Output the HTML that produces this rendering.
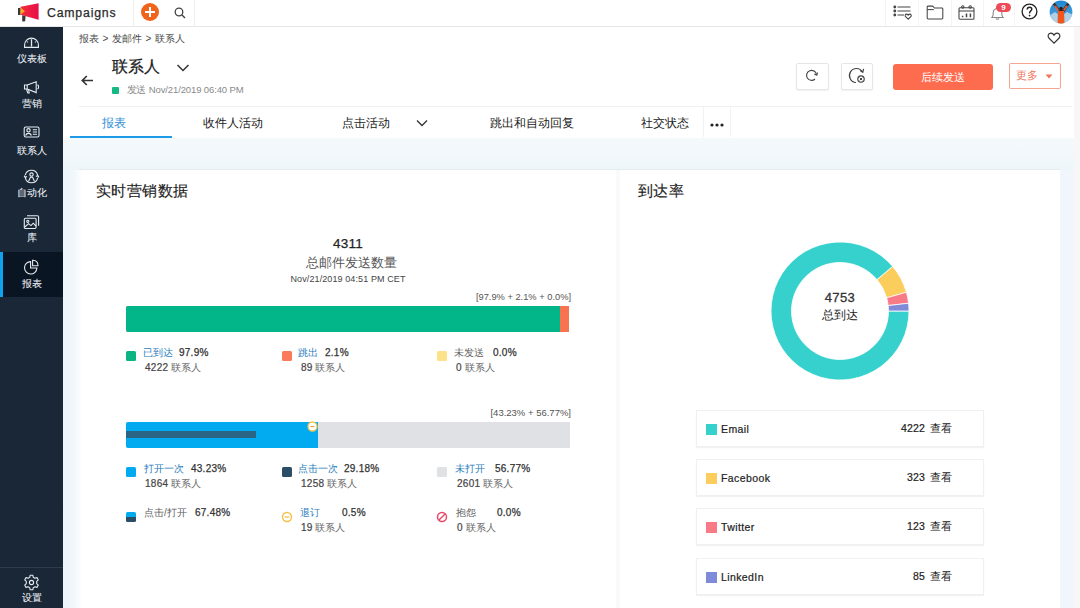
<!DOCTYPE html>
<html><head><meta charset="utf-8">
<style>
*{margin:0;padding:0;box-sizing:border-box}
html,body{width:1080px;height:608px;overflow:hidden;background:#fff;font-family:"Liberation Sans",sans-serif;color:#222}
.a{position:absolute;white-space:nowrap}
#top{position:absolute;left:0;top:0;width:1080px;height:27px;background:#fff;border-bottom:1px solid #e6e6e6}
#side{position:absolute;left:0;top:27px;width:63px;height:581px;background:#192737}
.sl{position:absolute;left:0;width:63px;text-align:center;color:#f2f4f7;font-size:10px;line-height:10px;-webkit-text-stroke:0.05px #f2f4f7}
#main{position:absolute;left:63px;top:27px;width:1017px;height:581px;background:#f0f6fb}
.sq{width:10px;height:10px;border-radius:1.5px}
.lk{font-size:10px;line-height:13px;color:#2a7dbd}
.gy{font-size:10px;line-height:13px;color:#5f5f5f}
.pc{font-size:10px;line-height:13px;color:#333;-webkit-text-stroke:0.25px #333;letter-spacing:0.25px}
.ct{font-size:9.6px;line-height:13px;color:#666}
.ct b{color:#444;font-weight:normal;-webkit-text-stroke:0.2px #444;letter-spacing:0.3px;font-size:10px}
.li{left:696px;width:288px;height:37px;border:1px solid #eef0f2;background:#fff;box-shadow:0 1px 1px rgba(0,0,0,0.05)}
.ls{position:absolute;left:9px;top:13px;width:11px;height:11px}
.ln{position:absolute;left:24px;top:11.5px;font-size:10.5px;line-height:13px;color:#222;-webkit-text-stroke:0.2px #222;letter-spacing:0.4px}
.lv{position:absolute;right:31px;top:11px;font-size:10.5px;line-height:13px;color:#222}
.lv b{font-weight:normal;-webkit-text-stroke:0.2px #222;letter-spacing:0.15px;margin-right:2px}
</style></head><body>
<div id="top">
  <svg class="a" style="left:14px;top:0px" width="30" height="26" viewBox="0 0 30 26">
    <defs><linearGradient id="mg" x1="0" y1="0" x2="1" y2="0"><stop offset="0" stop-color="#f52b3a"/><stop offset="1" stop-color="#e60f4a"/></linearGradient></defs>
    <rect x="4" y="8" width="2.6" height="7" fill="#3a3a3a"/>
    <path d="M6.6 6.8 L24.6 3.2 L24.6 19.7 L6.6 14.8 Z" fill="url(#mg)"/>
    <path d="M6.6 7.6 L11 11.2 L6.6 14.4 Z" fill="#ffa91c"/>
    <path d="M8.2 15.2 L11.6 16 L11.2 21 C11.1 21.6 8.2 21.6 8.2 21 Z" fill="#3a3a3a"/>
  </svg>
  <div class="a" style="left:47px;top:5.5px;font-size:12.3px;line-height:15px;color:#2a2a2a;-webkit-text-stroke:0.25px #2a2a2a;letter-spacing:0.8px">Campaigns</div>
  <div class="a" style="left:133px;top:0;width:1px;height:27px;background:#eee"></div>
  <div class="a" style="left:141px;top:3px;width:18px;height:18px;border-radius:50%;background:#f0631d"></div>
  <div class="a" style="left:149px;top:7px;width:2px;height:10px;background:#fff"></div>
  <div class="a" style="left:145px;top:11px;width:10px;height:2px;background:#fff"></div>
  <svg class="a" style="left:174px;top:7px" width="12" height="12" viewBox="0 0 12 12"><circle cx="5" cy="5" r="3.8" fill="none" stroke="#444" stroke-width="1.3"/><path d="M8 8 L11 11" stroke="#444" stroke-width="1.4"/></svg>
  <div class="a" style="left:194px;top:0;width:1px;height:27px;background:#eee"></div>
  <div class="a" style="left:885px;top:0;width:1px;height:26px;background:#f4f4f4"></div>
  <svg class="a" style="left:893px;top:5px" width="20" height="15" viewBox="0 0 20 15" fill="none" stroke="#444" stroke-width="1.05"><circle cx="1.8" cy="2" r="0.9" fill="#444"/><circle cx="1.8" cy="6" r="0.9" fill="#444"/><circle cx="1.8" cy="10" r="0.9" fill="#444"/><path d="M4.5 2 H17.5 M4.5 6 H17.5 M4.5 10 H11"/><path d="M15.2 14.2 L12.6 11.7 C11.7 10.8 12.2 9.1 13.5 9.1 C14.3 9.1 14.8 9.7 15.2 10.2 C15.6 9.7 16.1 9.1 16.9 9.1 C18.2 9.1 18.7 10.8 17.8 11.7 Z"/></svg>
  <div class="a" style="left:918px;top:0;width:1px;height:26px;background:#f4f4f4"></div>
  <svg class="a" style="left:926px;top:5px" width="18" height="15" viewBox="0 0 18 15" fill="none" stroke="#444" stroke-width="1.05"><path d="M1.2 3.6 V2 C1.2 1.4 1.5 1.1 2.1 1.1 H6.2 C6.8 1.1 7.2 1.5 7.6 2 L8.4 3 H15.9 C16.5 3 16.8 3.3 16.8 3.9 V13.1 C16.8 13.7 16.5 14 15.9 14 H2.1 C1.5 14 1.2 13.7 1.2 13.1 Z"/><path d="M1.2 4.6 H7.8"/></svg>
  <div class="a" style="left:951px;top:0;width:1px;height:26px;background:#f4f4f4"></div>
  <svg class="a" style="left:958px;top:5px" width="17" height="15" viewBox="0 0 17 15" fill="none" stroke="#444" stroke-width="1.05"><rect x="1" y="2.8" width="15" height="11.4" rx="1"/><path d="M1 6 H16"/><circle cx="4.8" cy="2" r="1.2"/><circle cx="12.2" cy="2" r="1.2"/><path d="M4.6 10.8 V12.2 M8.5 8.6 V12.2 M12.4 8.6 V12.2" stroke-width="1.5"/></svg>
  <div class="a" style="left:983px;top:0;width:1px;height:26px;background:#f4f4f4"></div>
  <svg class="a" style="left:990px;top:7px" width="15" height="13" viewBox="0 0 15 13" fill="none" stroke="#888" stroke-width="1.1"><path d="M2 10.5 C3.5 9 3 8 3.2 5.5 C3.5 2.5 5.5 1.5 7.5 1.5 C9.5 1.5 11.5 2.5 11.8 5.5 C12 8 11.5 9 13 10.5 Z"/><path d="M6 11.5 C6.3 12.5 8.7 12.5 9 11.5"/></svg>
  <div class="a" style="left:996px;top:3px;width:15px;height:9px;border-radius:5px;background:#ef4a58;color:#fff;font-size:8px;line-height:9px;text-align:center;font-weight:bold">9</div>
  <div class="a" style="left:1014px;top:0;width:1px;height:26px;background:#f4f4f4"></div>
  <svg class="a" style="left:1021px;top:3px" width="17" height="17" viewBox="0 0 17 17"><circle cx="8.5" cy="8.5" r="7.4" fill="none" stroke="#222" stroke-width="1.3"/><path d="M6.2 6.6 C6.2 5 7.2 4.2 8.5 4.2 C9.9 4.2 10.8 5.1 10.8 6.3 C10.8 7.8 8.6 8 8.6 9.8 V10.4" fill="none" stroke="#222" stroke-width="1.4"/><circle cx="8.6" cy="12.6" r="0.9" fill="#222"/></svg>
  <svg class="a" style="left:1049px;top:0px" width="24" height="24" viewBox="0 0 24 24"><defs><clipPath id="av"><circle cx="12" cy="12" r="11.4"/></clipPath><linearGradient id="sky" x1="0" y1="0" x2="0" y2="1"><stop offset="0" stop-color="#1e86d2"/><stop offset="1" stop-color="#5aa8dc"/></linearGradient></defs><g clip-path="url(#av)"><rect x="0" y="0" width="24" height="24" fill="url(#sky)"/><path d="M0 16 L6 12 L10 15 L10 24 H0 Z" fill="#c9dcea" opacity="0.8"/><path d="M24 15 L18 12 L14 15 L14 24 H24 Z" fill="#c9dcea" opacity="0.8"/><path d="M3.5 4 L6 3 L10.5 9.5 H13.5 L18 3 L20.5 4 L15.5 12 L11 12 Z" fill="#3a2824"/><path d="M5 6 L7 5.5 L10 10 L8.5 11 Z M19 6 L17 5.5 L14 10 L15.5 11 Z" fill="#d9603a"/><circle cx="12" cy="8.5" r="1.8" fill="#2a1f1c"/><path d="M9 11 H15 L15.5 24 H8.5 Z" fill="#f2561a"/></g></svg>
</div>
<div id="side">
  <svg class="a" style="left:23px;top:9px" width="17" height="13" viewBox="0 0 17 13" fill="none" stroke="#e6ebf0" stroke-width="1.15"><path d="M1.6 11.4 V9 A6.9 6.9 0 0 1 15.4 9 V11.4 Z"/><path d="M8.5 3.2 V10.6" stroke-width="1.3"/><path d="M4 5.6 L4.9 6.4 M13 5.6 L12.1 6.4"/></svg>
  <div class="sl" style="top:27px">仪表板</div>
  <svg class="a" style="left:23px;top:54px" width="17" height="13" viewBox="0 0 17 13" fill="none" stroke="#e6ebf0" stroke-width="1.1"><path d="M1.5 4 H4.2 V8 H1.5 Z"/><path d="M4.2 4 L13.2 0.8 V11.6 L4.2 8"/><path d="M14.5 3.8 C16 4.8 16 7 14.5 8"/><path d="M3.5 8.2 L4.8 12 H6.2 L5.6 8.6"/></svg>
  <div class="sl" style="top:72px">营销</div>
  <svg class="a" style="left:23px;top:99px" width="17" height="12" viewBox="0 0 17 12" fill="none" stroke="#e6ebf0" stroke-width="1.1"><rect x="1.2" y="1" width="14.8" height="10" rx="1.5"/><circle cx="5.5" cy="4.3" r="1.7"/><path d="M2.8 9.6 C3 6.6 8 6.6 8.2 9.6"/><path d="M9.8 3.8 H14 M9.8 6 H14 M9.8 8.2 H14"/></svg>
  <div class="sl" style="top:119px">联系人</div>
  <svg class="a" style="left:23px;top:142px" width="17" height="15" viewBox="0 0 17 15" fill="none" stroke="#e6ebf0" stroke-width="1.1"><path d="M2.3 6.2 A6.3 6.3 0 0 1 14.6 6.2"/><path d="M14.7 8.6 A6.3 6.3 0 0 1 2.3 8.6"/><path d="M13 7.6 L14.8 6.6 L15.9 8.4"/><path d="M4 7.4 L2.2 8.4 L1.1 6.6"/><circle cx="8.5" cy="5.6" r="1.7"/><path d="M5.6 12.2 L7.4 8.2 H9.6 L11.4 12.2"/></svg>
  <div class="sl" style="top:161px">自动化</div>
  <svg class="a" style="left:23px;top:187px" width="17" height="16" viewBox="0 0 17 16" fill="none" stroke="#e6ebf0" stroke-width="1.1"><rect x="1.3" y="4.2" width="11.8" height="10.3" rx="1.2"/><path d="M4 1.8 H14.4 C15.2 1.8 15.6 2.2 15.6 3 V11.8"/><circle cx="4.8" cy="7.3" r="1.1"/><path d="M1.8 13 L5.5 9.6 L8 11.6 L10.2 9.2 L13 12"/></svg>
  <div class="sl" style="top:206px">库</div>
  <div class="a" style="left:0;top:224.5px;width:63px;height:45px;background:#0a1524"></div>
  <div class="a" style="left:0;top:224.5px;width:2.5px;height:45px;background:#11a2ee"></div>
  <svg class="a" style="left:23px;top:232px" width="17" height="16" viewBox="0 0 17 16" fill="none" stroke="#e6ebf0" stroke-width="1.1"><path d="M7.6 2.6 A6.2 6.2 0 1 0 13.9 9 H7.6 Z"/><path d="M9.6 1.2 A5 5 0 0 1 15 6.8 H9.6 Z"/></svg>
  <div class="sl" style="top:252px">报表</div>
  <div class="a" style="left:0;top:540px;width:63px;height:1px;background:#2e3c4f"></div>
  <svg class="a" style="left:23px;top:547px" width="17" height="17" viewBox="0 0 17 17" fill="none" stroke="#e6ebf0" stroke-width="1.1"><path d="M7.2 1.2 H9.8 L10.3 3.3 L11.9 4.2 L14 3.6 L15.3 5.9 L13.7 7.4 V9.6 L15.3 11.1 L14 13.4 L11.9 12.8 L10.3 13.7 L9.8 15.8 H7.2 L6.7 13.7 L5.1 12.8 L3 13.4 L1.7 11.1 L3.3 9.6 V7.4 L1.7 5.9 L3 3.6 L5.1 4.2 L6.7 3.3 Z" stroke-linejoin="round"/><circle cx="8.5" cy="8.5" r="2.1"/></svg>
  <div class="sl" style="top:566px">设置</div>
</div>
<div id="main"></div>
<!-- header -->
<div class="a" style="left:63px;top:27px;width:1017px;height:80px;background:#fff"></div>
<div class="a" style="left:79px;top:106px;width:993px;height:1px;background:#eef0f2"></div>
<div class="a" style="left:79px;top:33px;font-size:10px;line-height:12px;color:#4a4a4a;word-spacing:0.8px">报表 &gt; 发邮件 &gt; 联系人</div>
<svg class="a" style="left:1047px;top:31.5px" width="14" height="12.5" viewBox="0 0 15 14" fill="none" stroke="#333" stroke-width="1.3"><path d="M7.5 12.5 L2 7 C0 5 0.8 1.5 3.8 1.3 C5.5 1.2 6.8 2.3 7.5 3.5 C8.2 2.3 9.5 1.2 11.2 1.3 C14.2 1.5 15 5 13 7 Z"/></svg>
<svg class="a" style="left:81px;top:75px" width="13" height="11" viewBox="0 0 13 11" fill="none" stroke="#333" stroke-width="1.7"><path d="M12 5.5 H1.5 M5.8 1 L1.3 5.5 L5.8 10"/></svg>
<div class="a" style="left:112px;top:58px;font-size:16px;line-height:18px;color:#222;-webkit-text-stroke:0.25px #222">联系人</div>
<svg class="a" style="left:176px;top:63px" width="14" height="10" viewBox="0 0 14 10" fill="none" stroke="#333" stroke-width="1.5"><path d="M1.5 2 L7 7.5 L12.5 2"/></svg>
<div class="a" style="left:112px;top:87px;width:7px;height:7px;background:#18b884;border-radius:1px"></div>
<div class="a" style="left:126.5px;top:84px;font-size:9.5px;line-height:12px;color:#8a8a8a;letter-spacing:-0.12px">发送 Nov/21/2019 06:40 PM</div>
<div class="a" style="left:796px;top:63px;width:33px;height:27px;border:1px solid #e6e6e6;border-radius:2px;background:#fff;box-shadow:0 1px 2px rgba(0,0,0,0.06)"></div>
<svg class="a" style="left:804px;top:69px" width="15" height="13" viewBox="0 0 15 13" fill="none" stroke="#444" stroke-width="1.1"><path d="M12.5 5.5 A5 5 0 1 0 11 10"/><path d="M10.3 5 L12.8 6.3 L13.6 3.6"/></svg>
<div class="a" style="left:841px;top:63px;width:32px;height:27px;border:1px solid #e6e6e6;border-radius:2px;background:#fff;box-shadow:0 1px 2px rgba(0,0,0,0.06)"></div>
<svg class="a" style="left:847px;top:66px" width="19" height="18" viewBox="0 0 19 18" fill="none" stroke="#444" stroke-width="1.2"><path d="M15.5 6 A7 7 0 1 0 9 16.5"/><path d="M13 4.6 L15.8 6.3 L16.6 2.8"/><circle cx="14" cy="13" r="3.2"/><path d="M12.7 11.7 L15.3 14.3 M15.3 11.7 L12.7 14.3" stroke-width="1"/></svg>
<div class="a" style="left:893px;top:64px;width:100px;height:26px;background:#fe6c4f;border-radius:3px;color:#fff;font-size:10.5px;line-height:26px;text-align:center">后续发送</div>
<div class="a" style="left:1009px;top:63px;width:52px;height:26px;border:1px solid #f7a593;border-radius:2px;background:#fff"></div>
<div class="a" style="left:1016px;top:69px;font-size:10.5px;line-height:12px;color:#f0765c">更多</div>
<svg class="a" style="left:1045px;top:74px" width="8" height="5" viewBox="0 0 8 5"><path d="M0.5 0.5 H7.5 L4 4.5 Z" fill="#f0765c"/></svg>
<!-- tabs -->
<div class="a" style="left:63px;top:107px;width:1017px;height:31px;background:#fff"></div>
<div class="a" style="left:102px;top:116px;font-size:12px;line-height:14px;color:#2f8fd8">报表</div>
<div class="a" style="left:70px;top:136px;width:102px;height:3px;background:#1d9be6"></div>
<div class="a" style="left:203px;top:116px;font-size:12px;line-height:14px;color:#222">收件人活动</div>
<div class="a" style="left:342px;top:116px;font-size:12px;line-height:14px;color:#222">点击活动</div>
<svg class="a" style="left:416px;top:119px" width="12" height="8" viewBox="0 0 12 8" fill="none" stroke="#333" stroke-width="1.3"><path d="M1 1.5 L6 6.5 L11 1.5"/></svg>
<div class="a" style="left:490px;top:116px;font-size:12px;line-height:14px;color:#222">跳出和自动回复</div>
<div class="a" style="left:641px;top:116px;font-size:12px;line-height:14px;color:#222">社交状态</div>
<div class="a" style="left:703px;top:107px;width:1px;height:30px;background:#f2f2f2"></div>
<div class="a" style="left:730px;top:107px;width:1px;height:30px;background:#f2f2f2"></div>
<svg class="a" style="left:710px;top:123px" width="14" height="4" viewBox="0 0 14 4"><circle cx="2" cy="2" r="1.6" fill="#222"/><circle cx="7" cy="2" r="1.6" fill="#222"/><circle cx="12" cy="2" r="1.6" fill="#222"/></svg>
<div class="a" style="left:63px;top:138px;width:1011px;height:32px;background:linear-gradient(#f4f9fc,#eff6fa)"></div>
<!-- cards -->
<div class="a" style="left:79px;top:170px;width:981px;height:438px;background:#fff;box-shadow:0 -1px 1px rgba(0,0,0,0.04)"></div>
<div class="a" style="left:63px;top:170px;width:20px;height:438px;background:linear-gradient(to right,#ecf5fa 0%,#f1f7fb 55%,#fff 100%)"></div>
<div class="a" style="left:616px;top:170px;width:4px;height:438px;background:#f9fafa"></div>
<div class="a" style="left:96px;top:182px;font-size:15px;line-height:18px;color:#222;-webkit-text-stroke:0.15px #222;letter-spacing:0.4px">实时营销数据</div>
<div class="a" style="left:638px;top:182px;font-size:15px;line-height:18px;color:#222;-webkit-text-stroke:0.15px #222;letter-spacing:0.4px">到达率</div>

<div class="a" style="left:1074px;top:27px;width:6px;height:581px;background:#f7f7f7"></div>
<!-- left card -->
<div class="a" style="left:248px;top:236px;width:200px;text-align:center;font-size:13.5px;line-height:16px;color:#222;-webkit-text-stroke:0.25px #222;letter-spacing:0.3px">4311</div>
<div class="a" style="left:251px;top:255px;width:200px;text-align:center;font-size:12.6px;line-height:16px;color:#555">总邮件发送数量</div>
<div class="a" style="left:248px;top:273px;width:200px;text-align:center;font-size:9px;line-height:12px;color:#444;letter-spacing:0.1px">Nov/21/2019 04:51 PM CET</div>
<div class="a" style="left:370px;top:291px;width:201px;text-align:right;font-size:9.3px;line-height:12px;color:#555">[97.9% + 2.1% + 0.0%]</div>
<div class="a" style="left:126px;top:306px;width:443px;height:26px;background:#f8734f;border-radius:2px 0 0 2px;overflow:hidden"><div style="width:434px;height:26px;background:#02b68a"></div></div>
<div class="a sq" style="left:126px;top:351px;background:#0db584"></div>
<div class="a lk" style="left:143px;top:346px">已到达</div><div class="a pc" style="left:179px;top:346px">97.9%</div>
<div class="a ct" style="left:145px;top:361px"><b>4222</b> 联系人</div>
<div class="a sq" style="left:282px;top:351px;background:#fb7a5b"></div>
<div class="a lk" style="left:298px;top:346px">跳出</div><div class="a pc" style="left:325px;top:346px">2.1%</div>
<div class="a ct" style="left:301px;top:361px"><b>89</b> 联系人</div>
<div class="a sq" style="left:437px;top:351px;background:#fde28a"></div>
<div class="a gy" style="left:454px;top:346px">未发送</div><div class="a pc" style="left:493px;top:346px">0.0%</div>
<div class="a ct" style="left:456px;top:361px"><b>0</b> 联系人</div>

<div class="a" style="left:370px;top:407px;width:201px;text-align:right;font-size:9.5px;line-height:12px;color:#555">[43.23% + 56.77%]</div>
<div class="a" style="left:126px;top:422px;width:444px;height:26px;background:#dfe1e4;border-radius:2px 0 0 2px;overflow:hidden"><div style="position:absolute;left:0;top:0;width:192px;height:26px;background:#02abef"></div><div style="position:absolute;left:0;top:9px;width:130px;height:7px;background:#2a6585"></div></div>
<svg class="a" style="left:307px;top:421px" width="11" height="11" viewBox="0 0 11 11"><circle cx="5.5" cy="5.5" r="4.5" fill="#fff" stroke="#f5c64a" stroke-width="1.3"/><path d="M3.5 5.5 H7.5" stroke="#e0a82e" stroke-width="1.2"/></svg>
<div class="a sq" style="left:126px;top:467px;background:#02abef"></div>
<div class="a lk" style="left:144px;top:462px">打开一次</div><div class="a pc" style="left:191px;top:462px">43.23%</div>
<div class="a ct" style="left:145px;top:477px"><b>1864</b> 联系人</div>
<div class="a sq" style="left:282px;top:467px;background:#2b4e66"></div>
<div class="a lk" style="left:298px;top:462px">点击一次</div><div class="a pc" style="left:344px;top:462px">29.18%</div>
<div class="a ct" style="left:301px;top:477px"><b>1258</b> 联系人</div>
<div class="a sq" style="left:437px;top:467px;background:#e0e1e3"></div>
<div class="a lk" style="left:455px;top:462px">未打开</div><div class="a pc" style="left:495px;top:462px">56.77%</div>
<div class="a ct" style="left:457px;top:477px"><b>2601</b> 联系人</div>

<div class="a sq" style="left:126px;top:512px;background:linear-gradient(#02abef 50%,#2b4e66 50%)"></div>
<div class="a gy" style="left:144px;top:506px">点击/打开</div><div class="a pc" style="left:195px;top:506px">67.48%</div>
<svg class="a" style="left:281px;top:511px" width="12" height="12" viewBox="0 0 12 12"><circle cx="6" cy="6" r="4.5" fill="none" stroke="#f5bf45" stroke-width="1.4"/><path d="M3.8 6 H8.2" stroke="#f5bf45" stroke-width="1.3"/></svg>
<div class="a lk" style="left:300px;top:506px">退订</div><div class="a pc" style="left:342px;top:506px">0.5%</div>
<div class="a ct" style="left:301px;top:521px"><b>19</b> 联系人</div>
<svg class="a" style="left:436px;top:511px" width="12" height="12" viewBox="0 0 12 12"><circle cx="6" cy="6" r="4.5" fill="none" stroke="#e5486a" stroke-width="1.5"/><path d="M3 9 L9 3" stroke="#e5486a" stroke-width="1.5"/></svg>
<div class="a gy" style="left:456px;top:506px">抱怨</div><div class="a pc" style="left:497px;top:506px">0.0%</div>
<div class="a ct" style="left:457px;top:521px"><b>0</b> 联系人</div>
<!-- right card -->
<svg class="a" style="left:770px;top:241px" width="140" height="140" viewBox="-70 -70 140 140" id="donut"><path d="M69.00 0.00 A69 69 0 1 1 52.69 -44.55 L37.03 -31.32 A48.5 48.5 0 1 0 48.50 0.00 Z" fill="#36d1cd" stroke="#fff" stroke-width="0.8"/><path d="M52.69 -44.55 A69 69 0 0 1 66.41 -18.73 L46.68 -13.17 A48.5 48.5 0 0 0 37.03 -31.32 Z" fill="#fbcd5c" stroke="#fff" stroke-width="0.8"/><path d="M66.41 -18.73 A69 69 0 0 1 68.56 -7.74 L48.19 -5.44 A48.5 48.5 0 0 0 46.68 -13.17 Z" fill="#f77a86" stroke="#fff" stroke-width="0.8"/><path d="M68.56 -7.74 A69 69 0 0 1 69.00 -0.00 L48.50 -0.00 A48.5 48.5 0 0 0 48.19 -5.44 Z" fill="#7f8ad8" stroke="#fff" stroke-width="0.8"/></svg>
<div class="a" style="left:790px;top:290px;width:100px;text-align:center;font-size:13px;line-height:16px;color:#333;-webkit-text-stroke:0.3px #333;letter-spacing:0.4px">4753</div>
<div class="a" style="left:790px;top:307px;width:100px;text-align:center;font-size:12.3px;line-height:16px;color:#222">总到达</div>
<div class="a li" style="top:410px"><span class="ls" style="background:#36d1cd"></span><span class="ln">Email</span><span class="lv"><b>4222</b>&nbsp;查看</span></div>
<div class="a li" style="top:459px"><span class="ls" style="background:#fbcd5c"></span><span class="ln">Facebook</span><span class="lv"><b>323</b>&nbsp;查看</span></div>
<div class="a li" style="top:508px"><span class="ls" style="background:#f77a86"></span><span class="ln">Twitter</span><span class="lv"><b>123</b>&nbsp;查看</span></div>
<div class="a li" style="top:558px"><span class="ls" style="background:#7f8ad8"></span><span class="ln">LinkedIn</span><span class="lv"><b>85</b>&nbsp;查看</span></div>
</body></html>
